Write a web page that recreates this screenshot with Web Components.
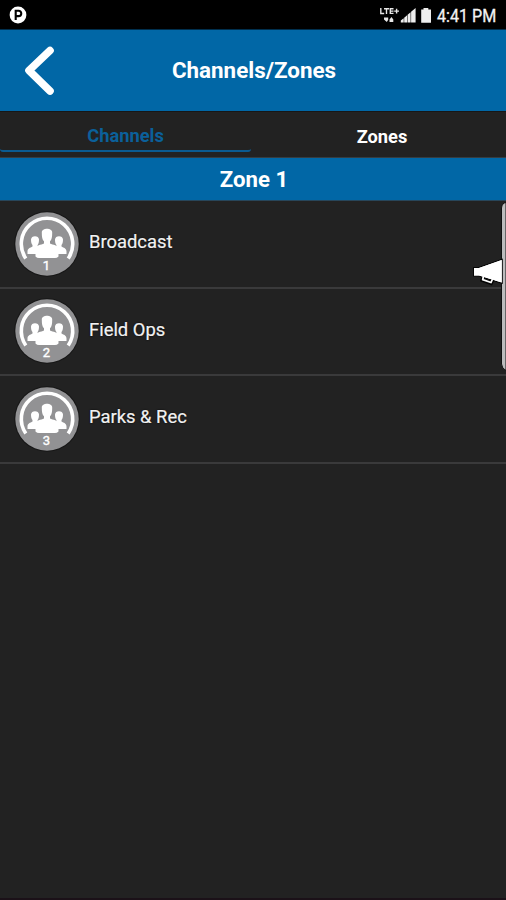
<!DOCTYPE html>
<html lang="en">
<head>
<meta charset="utf-8">
<title>Channels/Zones</title>
<style>
html,body{margin:0;height:100%;background:#222}
body{font-family:Roboto,"Liberation Sans",sans-serif;color:#fff;overflow:hidden}
</style>
</head>
<body>
<channels-app></channels-app>
<script>
const define = (name, html) => customElements.define(name, class extends HTMLElement {
  constructor() {
    super();
    const t = document.createElement('template');
    t.innerHTML = html;
    this.attachShadow({mode: 'open'}).append(t.content.cloneNode(true));
  }
});

define('status-bar', `
<style>
:host{display:flex;align-items:center;height:30px;box-sizing:border-box;background:linear-gradient(#000 29px,#00304f 29px);padding:0 10px 0 9px}
.sp{flex:1}
time{font-size:17.5px;line-height:30px;width:59px;margin-left:4px;padding-top:2px;color:#f2f2f2;-webkit-text-stroke:.3px #f2f2f2;white-space:nowrap;transform:scaleX(.92);transform-origin:0 0}
svg{display:block}
</style>
<svg width="18" height="30" viewBox="0 0 18 30"><circle cx="9" cy="15" r="8.4" fill="#fff"/><path d="M6.7 20V10.8H9.6a2.6 2.6 0 0 1 0 5.3H6.7" fill="none" stroke="#000" stroke-width="2.1"/></svg>
<span class="sp"></span>
<svg width="53" height="30" viewBox="0 0 53 30">
<g fill="none" stroke="#e8e8e8" stroke-width="1.4"><path d="M.8 8v5.500h3.400M4 8.700h5M6.500 8.700V14M13.500 8.700h-3.200v4.700h3.200M10.300 11.100h3.200M14.200 11.100h4.800M16.600 8.800v4.700"/></g>
<path d="M4 17.500h4.200v2.300L6.800 22 4 19.500zM9.500 22v-2.500l2-2.500 1.800 2.500V22z" fill="#e8e8e8"/>
<g fill="#eee"><path d="M20.800 22.500v-2.100l2.900-2.100v4.200zM24.200 22.500v-4.800l2.900-2.400v7.200zM27.600 22.500v-7.800l3-2.400v10.200zM31.100 22.500V11.700L35.600 8v14.500z"/>
<path d="M43.500 8h4.800v1.500h2.700v13.300h-9.800V9.500h2.300z"/></g></svg>
<time>4:41 PM</time>`);

define('app-header', `
<style>
:host{display:grid;grid-template-columns:80px 1fr 80px;height:81px;background:#0167a6;align-items:start}
h1{margin:0;padding-top:27px;line-height:27px;text-align:center;font-size:22.4px;font-weight:700;white-space:nowrap;transform:translateX(1px)}
svg{display:block}
</style>
<svg width="80" height="81" viewBox="0 0 80 81"><path d="M50 20.500 29 40.500 50 61" fill="none" stroke="#fff" stroke-width="7.600" stroke-linecap="round" stroke-linejoin="round"/></svg>
<h1><slot></slot></h1><span></span>`);

define('tab-item', `
<style>
:host{display:block;box-sizing:border-box;height:40px;padding:13px 0 0 5px;text-align:center;font-size:18.3px;line-height:24px;font-weight:700}
:host([active]){color:#0b609a;border-bottom:2px solid #0a5b91;border-radius:0 0 3px 3px;padding:12px 0 0}
</style><slot></slot>`);

define('tab-bar', `
<style>
:host{display:grid;grid-template-columns:251px 1fr;column-gap:2px;height:47px;box-sizing:border-box;background:#222;border-top:1px solid #171717}
</style><slot></slot>`);

define('zone-heading', `
<style>
:host{display:block;height:43px;line-height:42px;padding-left:2px;background:#0167a6;text-align:center;font-size:22.2px;font-weight:700;border-bottom:1px solid #28465a;box-sizing:border-box;box-shadow:0 -1px #363d42}
</style><slot></slot>`);

define('group-badge', `
<style>
:host{display:grid;width:66px;height:66px;flex:none}
svg,span{grid-area:1/1}
svg{display:block}
span{align-self:end;text-align:center;font-size:13px;line-height:14px;padding-bottom:4px;-webkit-text-stroke:.4px #fff}
</style>
<svg width="66" height="66" viewBox="0 0 66 66">
<circle cx="33" cy="33" r="32.800" fill="#171717"/>
<circle cx="33" cy="33" r="31.700" fill="#929294"/>
<path d="M11.800 47.500A25.700 25.700 0 1 1 54.200 47.500" fill="none" stroke="#fff" stroke-width="3.600"/>
<g fill="#fff">
<path d="M17 28.500c0-4.500 8-4.500 8 0 0 2.800-.4 4.200-1.400 5.500v1.600l4 2V43H13.500v-2.500c0-2.800 2.800-3.700 5-4.900V34c-1.100-1.300-1.500-2.700-1.500-5.500z"/>
<path d="M49 28.500c0-4.500-8-4.500-8 0 0 2.800.4 4.200 1.400 5.500v1.600l-4 2V43H52.500v-2.500c0-2.800-2.800-3.700-5-4.900V34c1.100-1.300 1.500-2.700 1.500-5.500z"/>
<path d="M27.800 21.500c0-5 10.400-5 10.400 0 0 4.800-.5 7.200-2.200 8.800v2.200c2.700 1.500 8.500 1.500 8.500 5.700v7.300q-1.500 1.600-3.500 1.600H25q-2 0-3.500-1.600v-7.300c0-4.200 5.800-4.200 8.500-5.700v-2.200c-1.700-1.600-2.200-4-2.200-8.800z"/>
</g></svg>
<span><slot></slot></span>`);

define('channel-row', `
<style>
:host{display:flex;height:87.500px;box-sizing:border-box;border-bottom:2px solid #3a3a3b;padding:9.900px 0 0 13.500px;gap:9.500px}
b{font-weight:400;font-size:18.400px;line-height:24px;padding-top:19.200px;color:#f2f2f2;text-shadow:0 0 2px #000;-webkit-text-stroke:.2px #f2f2f2}
</style>
<group-badge><slot name="number"></slot></group-badge><b><slot></slot></b>`);

define('side-drawer', `
<style>
:host{position:absolute;right:0;top:202px;width:33px;height:169px;display:grid}
svg{display:block}
</style>
<svg width="33" height="169" viewBox="0 0 33 169">
<path d="M33 .5Q29 1 28.500 6v156q.5 5 4.500 6.500z" fill="#bcbcbd" stroke="#111"/>
<path d="M1 66h5L28.700 58v22.500L6 73.500H1z" fill="#fff" stroke="#050505" stroke-width="2.200" paint-order="stroke"/>
<path d="m10.500 75-1 3 8.500 3 2-4" fill="none" stroke="#050505" stroke-width="4"/>
<path d="m10.500 74-.8 3.700 8.300 2.800 1.500-3.500" fill="none" stroke="#fff" stroke-width="1.800" stroke-linejoin="round"/>
<path d="M1 66h5L28.700 58v22.500L6 73.500H1z" fill="#fff"/>
</svg>`);

define('channels-app', `
<style>
:host{display:block;position:relative;width:506px;height:900px;background:linear-gradient(#222 898px,#1b1118 898px)}
</style>
<status-bar></status-bar>
<app-header>Channels/Zones</app-header>
<tab-bar><tab-item active>Channels</tab-item><tab-item>Zones</tab-item></tab-bar>
<zone-heading>Zone 1</zone-heading>
<channel-row><span slot="number">1</span>Broadcast</channel-row>
<channel-row><span slot="number">2</span>Field Ops</channel-row>
<channel-row><span slot="number">3</span>Parks &amp; Rec</channel-row>
<side-drawer></side-drawer>`);
</script>
</body>
</html>
